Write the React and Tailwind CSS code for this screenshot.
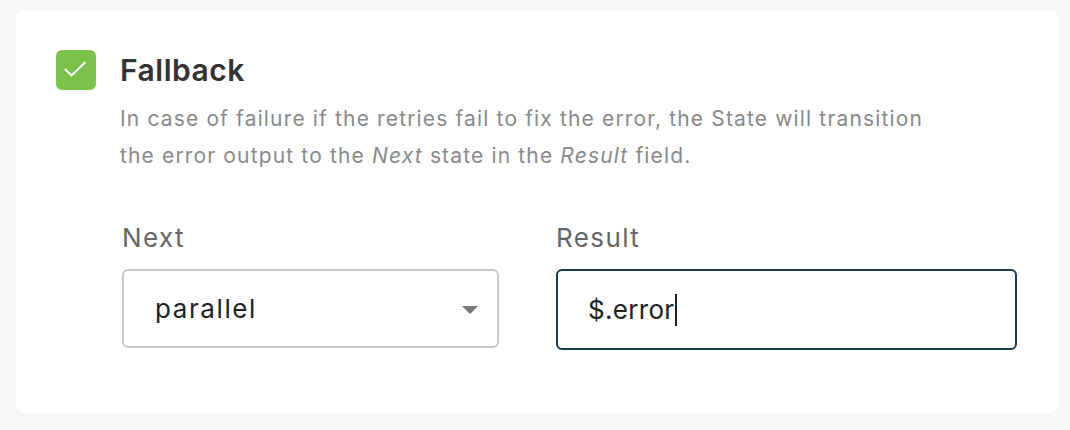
import { useState } from 'react';

function App() {
  const [next, setNext] = useState('parallel');
  const [result, setResult] = useState('$.error');

  return (
    <div className="w-[1070px] h-[430px] bg-[#f6f6f6] pt-[10px] pl-4 pr-3 font-['Inter',sans-serif]">
      <div className="h-[403px] bg-white rounded-lg pt-10 pl-10">
        {/* Header */}
        <div className="flex items-start">
          <div className="w-10 h-10 rounded-md bg-[#7bc24a] shrink-0">
            <svg width="40" height="40" viewBox="0 0 40 40" fill="none">
              <path d="M9.5 19.5l6 6 13.5-13" stroke="white" strokeWidth="1.8" strokeLinecap="round" strokeLinejoin="round" />
            </svg>
          </div>
          <div className="ml-6">
            <h3 className="text-[30px] leading-[40px] font-semibold tracking-[0.5px] text-[#333]">Fallback</h3>
            <p className="mt-[10px] text-[21px] leading-[37px] tracking-[1.15px] text-[#8a8a8a] whitespace-nowrap">
              In case of failure if the retries fail to fix the error, the State will transition
              <br />
              the error output to the <em>Next</em> state in the <em>Result</em> field.
            </p>
          </div>
        </div>

        {/* Fields */}
        <div className="mt-[46px] ml-[66px] grid grid-cols-[377px_461px] gap-x-[57px]">
          <div>
            <label className="block text-[26px] leading-[36px] tracking-[1.4px] text-[#666]">Next</label>
            <div className="relative mt-[13px]">
              <select
                value={next}
                onChange={(e) => setNext(e.target.value)}
                className="appearance-none w-full h-[79px] pl-[31px] pr-12 border-2 border-[#c9c9c9] rounded-md bg-white text-[26px] tracking-[1.6px] text-[#222] outline-none"
              >
                <option value="parallel">parallel</option>
                <option value="choice">choice</option>
                <option value="end">end</option>
              </select>
              <svg className="absolute right-[21px] top-[37px] pointer-events-none" width="16" height="8" viewBox="0 0 16 8">
                <path d="M0 0h16L8 8z" fill="#777" />
              </svg>
            </div>
          </div>
          <div>
            <label className="block text-[26px] leading-[36px] tracking-[1.4px] text-[#666]">Result</label>
            <div className="mt-[13px] h-[81px] border-2 border-[#1e3b4a] rounded-md flex items-center pl-[30px]">
              <input
                value={result}
                onChange={(e) => setResult(e.target.value)}
                className="hidden"
              />
              <span className="text-[26px] tracking-[0.3px] text-[#222]">{result}</span>
              <span className="w-[2px] h-[32px] bg-[#222] ml-[1px]" />
            </div>
          </div>
        </div>
      </div>
    </div>
  );
}

export default App;
